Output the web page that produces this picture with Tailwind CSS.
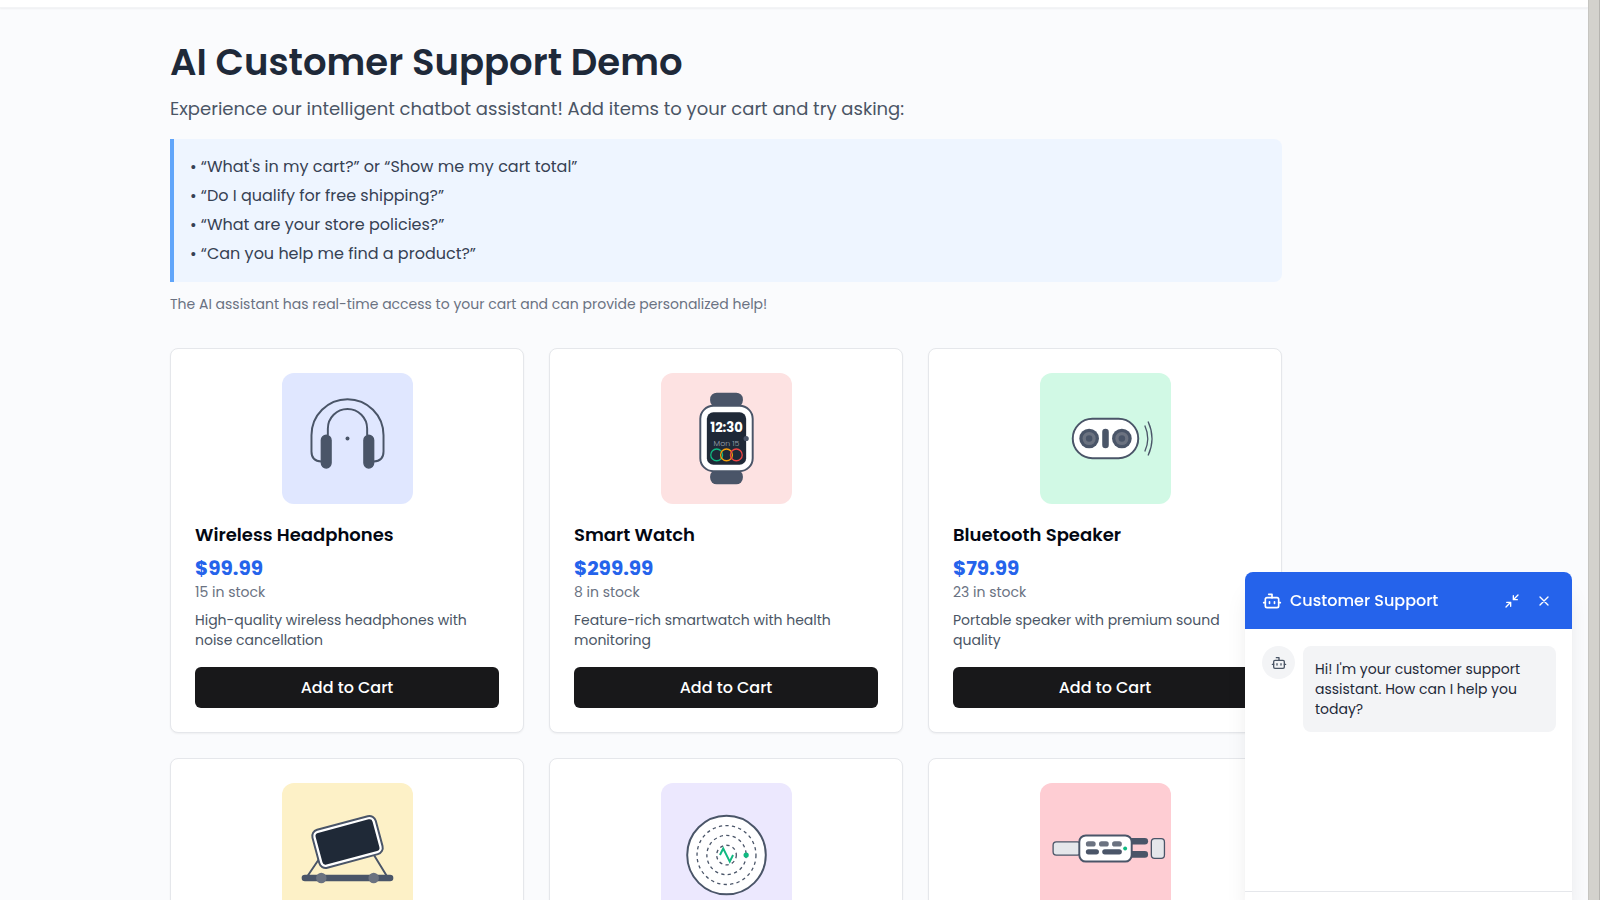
<!DOCTYPE html>
<html lang="en">
<head>
<meta charset="utf-8">
<meta name="viewport" content="width=device-width, initial-scale=1">
<title>AI Customer Support Demo</title>
<script src="https://cdn.jsdelivr.net/npm/@tailwindcss/browser@4"></script>
</head>
<body class="flex h-screen overflow-hidden bg-[#d3d2cd] font-[Poppins,Inter,sans-serif]">
<div class="min-w-0 flex-1 bg-[#fafbfd]">
  <header class="h-2 border-b border-gray-100 bg-white shadow-xs"></header>
  <main class="pt-[29px] pr-[306px] pl-[170px]">
    <h1 class="text-[37px] leading-[50px] font-semibold text-gray-800">AI Customer Support Demo</h1>
    <p class="mt-2 text-[18px] leading-7 text-gray-600">Experience our intelligent chatbot assistant! Add items to your cart and try asking:</p>
    <ul class="mt-4 space-y-[5px] rounded-r-lg border-l-4 border-[#60a5fa] bg-[#eef5ff] p-4 text-[16px] leading-6 text-gray-700">
      <li>• “What's in my cart?” or “Show me my cart total”</li>
      <li>• “Do I qualify for free shipping?”</li>
      <li>• “What are your store policies?”</li>
      <li>• “Can you help me find a product?”</li>
    </ul>
    <p class="mt-3 text-[14px] leading-5 text-gray-500">The AI assistant has real-time access to your cart and can provide personalized help!</p>

    <div class="mt-[34px] grid grid-cols-3 gap-[25px]">
      <article class="rounded-lg border border-gray-200 bg-white p-6 shadow-xs">
        <svg class="mx-auto size-[131px] rounded-xl bg-indigo-100" viewBox="0 0 200 200" fill="none" stroke="#4a5568" stroke-width="3" aria-hidden="true">
          <path d="M60 135Q45 135 45 120V95A55 55 0 0 1 155 95V120Q155 135 140 135M70 95V85A30 30 0 0 1 130 85V95"/>
          <rect x="60" y="95" width="15" height="50" rx="7.5" fill="#4a5568" stroke-width="2"/>
          <rect x="125" y="95" width="15" height="50" rx="7.5" fill="#4a5568" stroke-width="2"/>
          <circle cx="100" cy="100" r="3" fill="#4a5568" stroke="none"/>
        </svg>
        <h2 class="mt-[17px] text-[18px] leading-7 font-semibold text-gray-950">Wireless Headphones</h2>
        <p class="mt-[3px] text-[20px] leading-8 font-bold text-[#2563eb]">$99.99</p>
        <p class="text-[14px] leading-4 text-gray-500">15 in stock</p>
        <p class="mt-2.5 text-[14px] leading-5 text-gray-600">High-quality wireless headphones with noise cancellation</p>
        <button type="button" class="mt-[17px] h-[41px] w-full rounded-md bg-[#18181a] text-[16px] font-medium text-white">Add to Cart</button>
      </article>

      <article class="rounded-lg border border-gray-200 bg-white p-6 shadow-xs">
        <svg class="mx-auto size-[131px] rounded-xl bg-[#fde2e2]" viewBox="0 0 200 200" aria-hidden="true">
          <rect x="75" y="30" width="50" height="22" rx="10" fill="#4a5568"/>
          <rect x="75" y="148" width="50" height="22" rx="10" fill="#4a5568"/>
          <rect x="60" y="50" width="80" height="100" rx="20" fill="#fff" stroke="#4a5568" stroke-width="3"/>
          <rect x="70" y="60" width="60" height="80" rx="10" fill="#1f2937"/>
          <circle cx="130" cy="100" r="4" fill="#4a5568"/>
          <text x="100" y="90" text-anchor="middle" font-size="20" font-weight="700" fill="#fff">12:30</text>
          <text x="100" y="111" text-anchor="middle" font-size="12" font-weight="300" fill="#9ca3af">Mon 15</text>
          <g fill="none" stroke-width="2"><circle cx="85" cy="125" r="9" stroke="#10b981"/><circle cx="100" cy="125" r="9" stroke="#f59e0b"/><circle cx="115" cy="125" r="9" stroke="#ef4444"/></g>
        </svg>
        <h2 class="mt-[17px] text-[18px] leading-7 font-semibold text-gray-950">Smart Watch</h2>
        <p class="mt-[3px] text-[20px] leading-8 font-bold text-[#2563eb]">$299.99</p>
        <p class="text-[14px] leading-4 text-gray-500">8 in stock</p>
        <p class="mt-2.5 text-[14px] leading-5 text-gray-600">Feature-rich smartwatch with health monitoring</p>
        <button type="button" class="mt-[17px] h-[41px] w-full rounded-md bg-[#18181a] text-[16px] font-medium text-white">Add to Cart</button>
      </article>

      <article class="rounded-lg border border-gray-200 bg-white p-6 shadow-xs">
        <svg class="mx-auto size-[131px] rounded-xl bg-[#d1f9e5]" viewBox="0 0 200 200" aria-hidden="true">
          <rect x="50" y="70" width="100" height="60" rx="30" fill="#fff" stroke="#4a5568" stroke-width="3"/>
          <g fill="#4a5568"><circle cx="75" cy="100" r="15"/><circle cx="125" cy="100" r="15"/><rect x="95" y="85" width="10" height="30" rx="5"/></g>
          <g fill="#6b7280"><circle cx="75" cy="100" r="10"/><circle cx="125" cy="100" r="10"/></g>
          <g fill="#4a5568"><circle cx="75" cy="100" r="5"/><circle cx="125" cy="100" r="5"/></g>
          <path d="M160 80Q169 100 160 120M165 74Q177 100 165 126" fill="none" stroke="#4a5568" stroke-width="2"/>
        </svg>
        <h2 class="mt-[17px] text-[18px] leading-7 font-semibold text-gray-950">Bluetooth Speaker</h2>
        <p class="mt-[3px] text-[20px] leading-8 font-bold text-[#2563eb]">$79.99</p>
        <p class="text-[14px] leading-4 text-gray-500">23 in stock</p>
        <p class="mt-2.5 text-[14px] leading-5 text-gray-600">Portable speaker with premium sound quality</p>
        <button type="button" class="mt-[17px] h-[41px] w-full rounded-md bg-[#18181a] text-[16px] font-medium text-white">Add to Cart</button>
      </article>

      <article class="rounded-lg border border-gray-200 bg-white p-6 shadow-xs">
        <svg class="mx-auto size-[131px] rounded-xl bg-[#fdf1c7]" viewBox="0 0 200 200" aria-hidden="true">
          <path d="M39 142L62 108M160 142L138 106" stroke="#4a5568" stroke-width="3"/>
          <rect x="30" y="140" width="140" height="10" rx="5" fill="#4a5568"/>
          <g fill="#6b7280"><circle cx="60" cy="145" r="8"/><circle cx="140" cy="145" r="8"/></g>
          <g transform="rotate(-15 100 90)">
            <rect x="50" y="60" width="100" height="60" rx="10" fill="#fff" stroke="#4a5568" stroke-width="3"/>
            <rect x="55" y="65" width="90" height="50" rx="5" fill="#1f2937"/>
          </g>
        </svg>
      </article>

      <article class="rounded-lg border border-gray-200 bg-white p-6 shadow-xs">
        <svg class="mx-auto size-[131px] rounded-xl bg-[#ece8fe]" viewBox="0 0 200 200" fill="none" stroke="#4a5568" aria-hidden="true">
          <circle cx="100" cy="110" r="60" fill="#fff" stroke-width="3"/>
          <g stroke-width="2" stroke-dasharray="5 5"><circle cx="100" cy="110" r="45"/><circle cx="100" cy="110" r="30"/><circle cx="100" cy="110" r="15"/></g>
          <path d="M90 110L95 100L105 120L110 110" stroke="#10b981" stroke-width="3"/>
          <circle cx="130" cy="110" r="4" fill="#10b981" stroke="none"/>
        </svg>
      </article>

      <article class="rounded-lg border border-gray-200 bg-white p-6 shadow-xs">
        <svg class="mx-auto size-[131px] rounded-xl bg-[#fecdd3]" viewBox="0 0 200 200" aria-hidden="true">
          <g fill="#e5e7eb" stroke="#4a5568" stroke-width="2"><rect x="20" y="90" width="42" height="20" rx="5"/><rect x="170" y="85" width="20" height="30" rx="5"/></g>
          <g fill="#4a5568"><rect x="134" y="84" width="31" height="10" rx="5"/><rect x="134" y="104" width="31" height="10" rx="5"/></g>
          <rect x="60" y="80" width="80" height="40" rx="10" fill="#fff" stroke="#4a5568" stroke-width="3"/>
          <g fill="#6b7280"><rect x="70" y="89" width="15" height="8" rx="4"/><rect x="90" y="89" width="15" height="8" rx="4"/><rect x="110" y="89" width="15" height="8" rx="4"/></g>
          <g fill="#4a5568"><rect x="70" y="101" width="20" height="8" rx="4"/><rect x="95" y="101" width="30" height="8" rx="4"/></g>
          <circle cx="130" cy="100" r="3" fill="#10b981"/>
        </svg>
      </article>
    </div>
  </main>
</div>
<div class="w-3 shrink-0 border-r border-l border-r-[#b5b4b0] border-l-[#c6c5c1]"></div>

<aside class="fixed right-7 bottom-0 flex h-[328px] w-[327px] flex-col overflow-hidden rounded-t-lg bg-white shadow-xl" aria-label="Customer Support">
  <div class="flex h-[57px] shrink-0 items-center bg-[#2563eb] pr-3 pl-[17px] text-white">
    <svg class="size-5 shrink-0" viewBox="0 0 24 24" fill="none" stroke="currentColor" stroke-width="2" stroke-linecap="round" stroke-linejoin="round" aria-hidden="true"><path d="M12 8V4H8"/><rect x="4" y="8" width="16" height="12" rx="2"/><path d="M2 14h2M20 14h2M15 13v2M9 13v2"/></svg>
    <h3 class="ml-2 flex-1 text-[16px] leading-6 font-medium">Customer Support</h3>
    <button type="button" class="flex size-8 items-center justify-center" aria-label="Minimize">
      <svg class="size-4" viewBox="0 0 24 24" fill="none" stroke="currentColor" stroke-width="2" stroke-linecap="round" stroke-linejoin="round"><path d="M4 14h6v6M20 10h-6V4M14 10l7-7M3 21l7-7"/></svg>
    </button>
    <button type="button" class="flex size-8 items-center justify-center" aria-label="Close">
      <svg class="size-4" viewBox="0 0 24 24" fill="none" stroke="currentColor" stroke-width="2" stroke-linecap="round"><path d="M18 6L6 18M6 6l12 12"/></svg>
    </button>
  </div>
  <div class="flex flex-1 items-start gap-2 pt-[17px] pr-4 pl-[17px]">
    <span class="flex size-[33px] shrink-0 items-center justify-center rounded-full bg-gray-100 text-gray-600">
      <svg class="size-4" viewBox="0 0 24 24" fill="none" stroke="currentColor" stroke-width="2" stroke-linecap="round" stroke-linejoin="round" aria-hidden="true"><path d="M12 8V4H8"/><rect x="4" y="8" width="16" height="12" rx="2"/><path d="M2 14h2M20 14h2M15 13v2M9 13v2"/></svg>
    </span>
    <p class="flex-1 rounded-lg bg-gray-100 px-3 py-[13px] text-[14px] leading-5 text-gray-800">Hi! I'm your customer support assistant. How can I help you today?</p>
  </div>
  <div class="h-[9px] shrink-0 border-t border-gray-200"></div>
</aside>
</body>
</html>
